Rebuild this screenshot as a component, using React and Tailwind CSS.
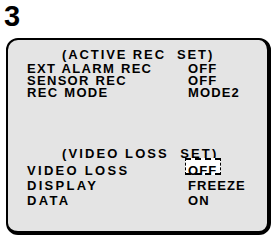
import React from "react";

const font = { fontFamily: '"Liberation Sans", Arial, sans-serif' };

function Row({ label, value, wide, cursor }) {
  return (
    <div className={`flex leading-[12px] h-[12px] ${wide ? "tracking-[2.3px]" : "tracking-[1.3px] [word-spacing:1px]"}`}>
      <div className="w-[161px] whitespace-nowrap">{label}</div>
      <div className="relative whitespace-nowrap tracking-[1.1px]">
        {cursor && (
          <span className="absolute -left-[3px] -top-[7px] w-[36px] h-[17px] bg-white border-y-2 border-x border-dashed border-black"></span>
        )}
        <span className="relative">{value}</span>
      </div>
    </div>
  );
}

export default function App() {
  return (
    <div className="w-[273px] h-[237px] bg-white overflow-hidden text-black" style={font}>
      <div className="pl-[4px] pt-[2px] h-[38px] text-[29px] font-bold leading-[28px]">3</div>
      <div className="ml-[6px] w-[265px] h-[197px] border-l-2 border-t-2 border-r-4 border-b-4 border-black rounded-[12px] bg-[#e4e4e4] pl-[19px] pt-[9px] text-[13px] font-bold">
        <div className="flex flex-col">
          <div className="pl-[35px] leading-[12px] h-[12px] tracking-[1.9px] whitespace-nowrap">(ACTIVE REC&nbsp;&nbsp;SET)</div>
          <div className="h-[2px]"></div>
          <Row label="EXT ALARM REC" value="OFF" />
          <Row label="SENSOR REC" value="OFF" />
          <Row label="REC MODE" value="MODE2" />
          <div className="h-[49px]"></div>
          <div className="pl-[35px] leading-[12px] h-[12px] tracking-[2.1px] whitespace-nowrap">(VIDEO LOSS&nbsp;&nbsp;SET)</div>
          <div className="h-[5px]"></div>
          <div className="flex flex-col gap-[3px]">
            <Row label="VIDEO LOSS" value="OFF" wide cursor />
            <Row label="DISPLAY" value="FREEZE" wide />
            <Row label="DATA" value="ON" wide />
          </div>
        </div>
      </div>
    </div>
  );
}
